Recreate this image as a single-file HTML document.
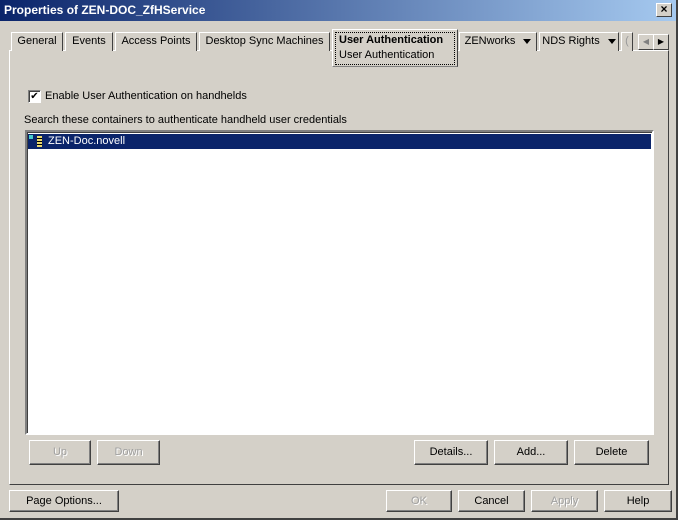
<!DOCTYPE html>
<html><head><style>
*{box-sizing:border-box;margin:0;padding:0}
body{width:678px;height:520px;background:#d4d0c8;font-family:"Liberation Sans",sans-serif;font-size:11px;position:relative;overflow:hidden;color:#000}
.a{position:absolute}
.title{left:0;top:0;width:678px;height:21px;background:linear-gradient(90deg,#0a246a,#a6caf0);color:#fff;font-weight:bold;font-size:12px;line-height:21px;padding-left:4px}
.x{left:656px;top:3px;width:16px;height:14px;background:#d4d0c8;border:1px solid;border-color:#fff #404040 #404040 #fff;font-size:12px;line-height:11px;text-align:center;font-weight:bold}
.tab{top:32px;height:19px;border:1px solid;border-color:#fff #404040 transparent #fff;border-bottom:none;line-height:17px;text-align:center;background:#d4d0c8}
.panel{left:9px;top:50px;width:660px;height:435px;border:1px solid;border-color:#fff #404040 #404040 #fff}
.btn{height:25px;border:1px solid;border-color:#fff #404040 #404040 #fff;box-shadow:inset -1px -1px 0 #808080;text-align:center;line-height:23px;background:#d4d0c8}
.dis{color:#a0a0a0;text-shadow:1px 1px 0 #fff}
.tri{display:inline-block;width:0;height:0;border:4px solid transparent;border-top:5px solid #000;border-bottom:0;margin-left:8px;vertical-align:middle}
</style></head><body>
<div class="a title">Properties of ZEN-DOC_ZfHService</div>
<div class="a x">×</div>
<div class="a panel"></div>
<div class="a tab" style="left:11px;width:52px">General</div>
<div class="a tab" style="left:65px;width:48px">Events</div>
<div class="a tab" style="left:115px;width:82px">Access Points</div>
<div class="a tab" style="left:199px;width:131px">Desktop Sync Machines</div>
<div class="a tab" style="left:459px;width:78px">ZENworks<span class="tri"></span></div>
<div class="a tab" style="left:539px;width:80px">NDS Rights<span class="tri"></span></div>
<div class="a tab" style="left:621px;width:12px;color:#999">(</div>
<div class="a" style="left:332px;top:29px;width:126px;height:38px;background:#d4d0c8;border:1px solid;border-color:#fff #404040 #808080 #fff"></div>
<div class="a" style="left:335px;top:32px;width:120px;height:33px;border:1px dotted #000;padding-left:3px;line-height:15px"><b>User Authentication</b><br>User Authentication</div>
<div class="a" style="left:638px;top:34px;width:16px;height:16px;border:1px solid;border-color:#fff #404040 #404040 #fff;color:#808080;font-size:8px;line-height:14px;text-align:center">◀</div>
<div class="a" style="left:653px;top:34px;width:16px;height:16px;border:1px solid;border-color:#fff #404040 #404040 #fff;font-size:8px;line-height:14px;text-align:center">▶</div>
<div class="a" style="left:28px;top:90px;width:13px;height:13px;background:#fff;border:1px solid;border-color:#808080 #fff #fff #808080;box-shadow:inset 1px 1px 0 #404040;font-size:10px;line-height:11px;text-align:center">✔</div>
<div class="a" style="left:45px;top:90px">Enable User Authentication on handhelds</div>
<div class="a" style="left:24px;top:114px">Search these containers to authenticate handheld user credentials</div>
<div class="a" style="left:25px;top:130px;width:629px;height:305px;background:#fff;border:2px solid;border-color:#808080 #fff #fff #808080;box-shadow:inset 1px 1px 0 #404040"></div>
<div class="a" style="left:28px;top:134px;width:623px;height:15px;background:#0a246a;color:#fff;line-height:15px;padding-left:20px">ZEN-Doc.novell</div>
<div class="a" style="left:29px;top:135px;width:4px;height:4px;background:#4cc"></div>
<div class="a" style="left:37px;top:136px;width:5px;height:11px;background:repeating-linear-gradient(#e8d870 0 2px,#000 2px 3px)"></div>
<div class="a btn dis" style="left:29px;top:440px;width:62px">Up</div>
<div class="a btn dis" style="left:97px;top:440px;width:63px">Down</div>
<div class="a btn" style="left:414px;top:440px;width:74px">Details...</div>
<div class="a btn" style="left:494px;top:440px;width:74px">Add...</div>
<div class="a btn" style="left:574px;top:440px;width:75px">Delete</div>
<div class="a btn" style="left:9px;top:490px;width:110px;height:22px;line-height:20px">Page Options...</div>
<div class="a btn dis" style="left:386px;top:490px;width:66px;height:22px;line-height:20px">OK</div>
<div class="a btn" style="left:458px;top:490px;width:67px;height:22px;line-height:20px">Cancel</div>
<div class="a btn dis" style="left:531px;top:490px;width:67px;height:22px;line-height:20px">Apply</div>
<div class="a btn" style="left:604px;top:490px;width:68px;height:22px;line-height:20px">Help</div>
<div class="a" style="left:0;top:518px;width:678px;height:2px;background:#404040"></div>
<div class="a" style="left:676px;top:0;width:2px;height:520px;background:#404040"></div>
</body></html>
